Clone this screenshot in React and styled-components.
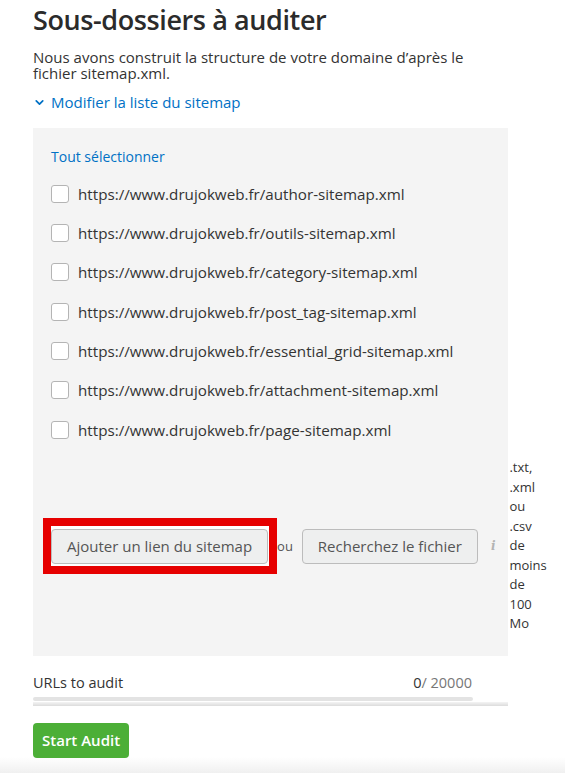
import styled, { createGlobalStyle } from "styled-components";
import { ChevronDown } from "lucide-react";

const sitemaps = [
  "https://www.drujokweb.fr/author-sitemap.xml",
  "https://www.drujokweb.fr/outils-sitemap.xml",
  "https://www.drujokweb.fr/category-sitemap.xml",
  "https://www.drujokweb.fr/post_tag-sitemap.xml",
  "https://www.drujokweb.fr/essential_grid-sitemap.xml",
  "https://www.drujokweb.fr/attachment-sitemap.xml",
  "https://www.drujokweb.fr/page-sitemap.xml",
];

const App = () => {
  return (
    <>
      <GlobalStyle />
      <Page>
        <Title>Sous-dossiers à auditer</Title>
        <Intro>
          Nous avons construit la structure de votre domaine d’après le
          <br />
          fichier sitemap.xml.
        </Intro>
        <Toggle>
          <ChevronDown size={13} strokeWidth={3.2} />
          Modifier la liste du sitemap
        </Toggle>
        <Panel>
          <SelectAll>Tout sélectionner</SelectAll>
          <List>
            {sitemaps.map((url) => (
              <Row key={url}>
                <Checkbox type="checkbox" />
                <Url>{url}</Url>
              </Row>
            ))}
          </List>
          <UploadRow>
            <Highlight>
              <Button>Ajouter un lien du sitemap</Button>
            </Highlight>
            <Or>ou</Or>
            <Button>Recherchez le fichier</Button>
            <InfoMark>i</InfoMark>
            <Hint>.txt, .xml ou .csv de moins de 100 Mo</Hint>
          </UploadRow>
        </Panel>
        <CounterRow>
          <span>URLs to audit</span>
          <Count>
            0<Total>/ 20000</Total>
          </Count>
        </CounterRow>
        <Progress />
        <Divider />
        <StartButton>Start Audit</StartButton>
      </Page>
    </>
  );
};

const GlobalStyle = createGlobalStyle`
  html, body {
    margin: 0;
    padding: 0;
  }
  body {
    min-height: 100vh;
    background: linear-gradient(to bottom, #fff calc(100% - 16px), #f0f0f0 100%);
    font-family: "Open Sans", "Noto Sans", sans-serif;
    color: #333;
  }
`;

const Page = styled.div`
  display: flex;
  flex-direction: column;
  align-items: flex-start;
  width: 475px;
  padding: 0 0 0 33px;
`;

const Title = styled.h1`
  margin: 2px 0 0;
  font-size: 27px;
  line-height: 36px;
  font-weight: 600;
  color: #2b2b2b;
  letter-spacing: -0.4px;
`;

const Intro = styled.p`
  margin: 11px 0 0;
  font-size: 15px;
  line-height: 16px;
  color: #333;
`;

const Toggle = styled.a`
  display: flex;
  align-items: center;
  gap: 5px;
  margin: 11px 0 0;
  font-size: 15px;
  line-height: 20px;
  color: #0071c5;
  cursor: pointer;
`;

const Panel = styled.div`
  align-self: stretch;
  margin-top: 16px;
  padding: 19px 0 22px 18px;
  background: #f4f4f4;
`;

const SelectAll = styled.a`
  display: block;
  font-size: 14px;
  line-height: 20px;
  color: #0071c5;
  cursor: pointer;
`;

const List = styled.div`
  display: flex;
  flex-direction: column;
  margin-top: 7px;
`;

const Row = styled.label`
  display: flex;
  align-items: center;
  gap: 9px;
  height: 39.35px;
`;

const Checkbox = styled.input`
  appearance: none;
  flex-shrink: 0;
  margin: 0;
  width: 18px;
  height: 18px;
  background: #fff;
  border: 1px solid #b4b4b4;
  border-radius: 3px;
`;

const Url = styled.span`
  font-size: 15.2px;
  color: #333;
`;

const UploadRow = styled.div`
  display: flex;
  align-items: center;
  margin-top: 9px;
`;

const Highlight = styled.span`
  display: inline-flex;
  flex-shrink: 0;
  margin: -11px 0 -10px -8px;
  padding: 3px 1px 2px 0;
  border: 8px solid #e60000;
  background: #fff;
`;

const Button = styled.button`
  flex-shrink: 0;
  height: 35px;
  padding: 0 15px;
  font-family: inherit;
  font-size: 15px;
  color: #555;
  background: #eeefef;
  border: 1px solid #bcbcbc;
  border-radius: 4px;
`;

const Or = styled.span`
  flex-shrink: 0;
  margin: 0 9px 0 0;
  font-size: 13px;
  color: #555;
`;

const InfoMark = styled.span`
  flex-shrink: 0;
  margin: 0 14px 0 13px;
  font-family: "DejaVu Serif", serif;
  font-style: italic;
  font-weight: bold;
  font-size: 12px;
  color: #b3b3b3;
`;

const Hint = styled.span`
  flex-shrink: 0;
  width: min-content;
  font-size: 13px;
  line-height: 19.5px;
  color: #333;
`;

const CounterRow = styled.div`
  display: flex;
  justify-content: space-between;
  width: 439px;
  margin-top: 16px;
  font-size: 14.5px;
  line-height: 22px;
`;

const Count = styled.span`
  color: #333;
`;

const Total = styled.span`
  color: #777;
`;

const Progress = styled.div`
  width: 440px;
  height: 4px;
  margin-top: 3px;
  border-radius: 2px;
  background: #e3e3e3;
`;

const Divider = styled.div`
  align-self: stretch;
  height: 4px;
  margin-top: 1px;
  background: linear-gradient(to bottom, #f4f4f4, #dcdcdc);
`;

const StartButton = styled.button`
  margin-top: 17px;
  height: 35px;
  padding: 0 9px;
  font-family: inherit;
  font-size: 15px;
  font-weight: 600;
  color: #fff;
  background: #4caf37;
  border: none;
  border-radius: 4px;
`;

export default App;
